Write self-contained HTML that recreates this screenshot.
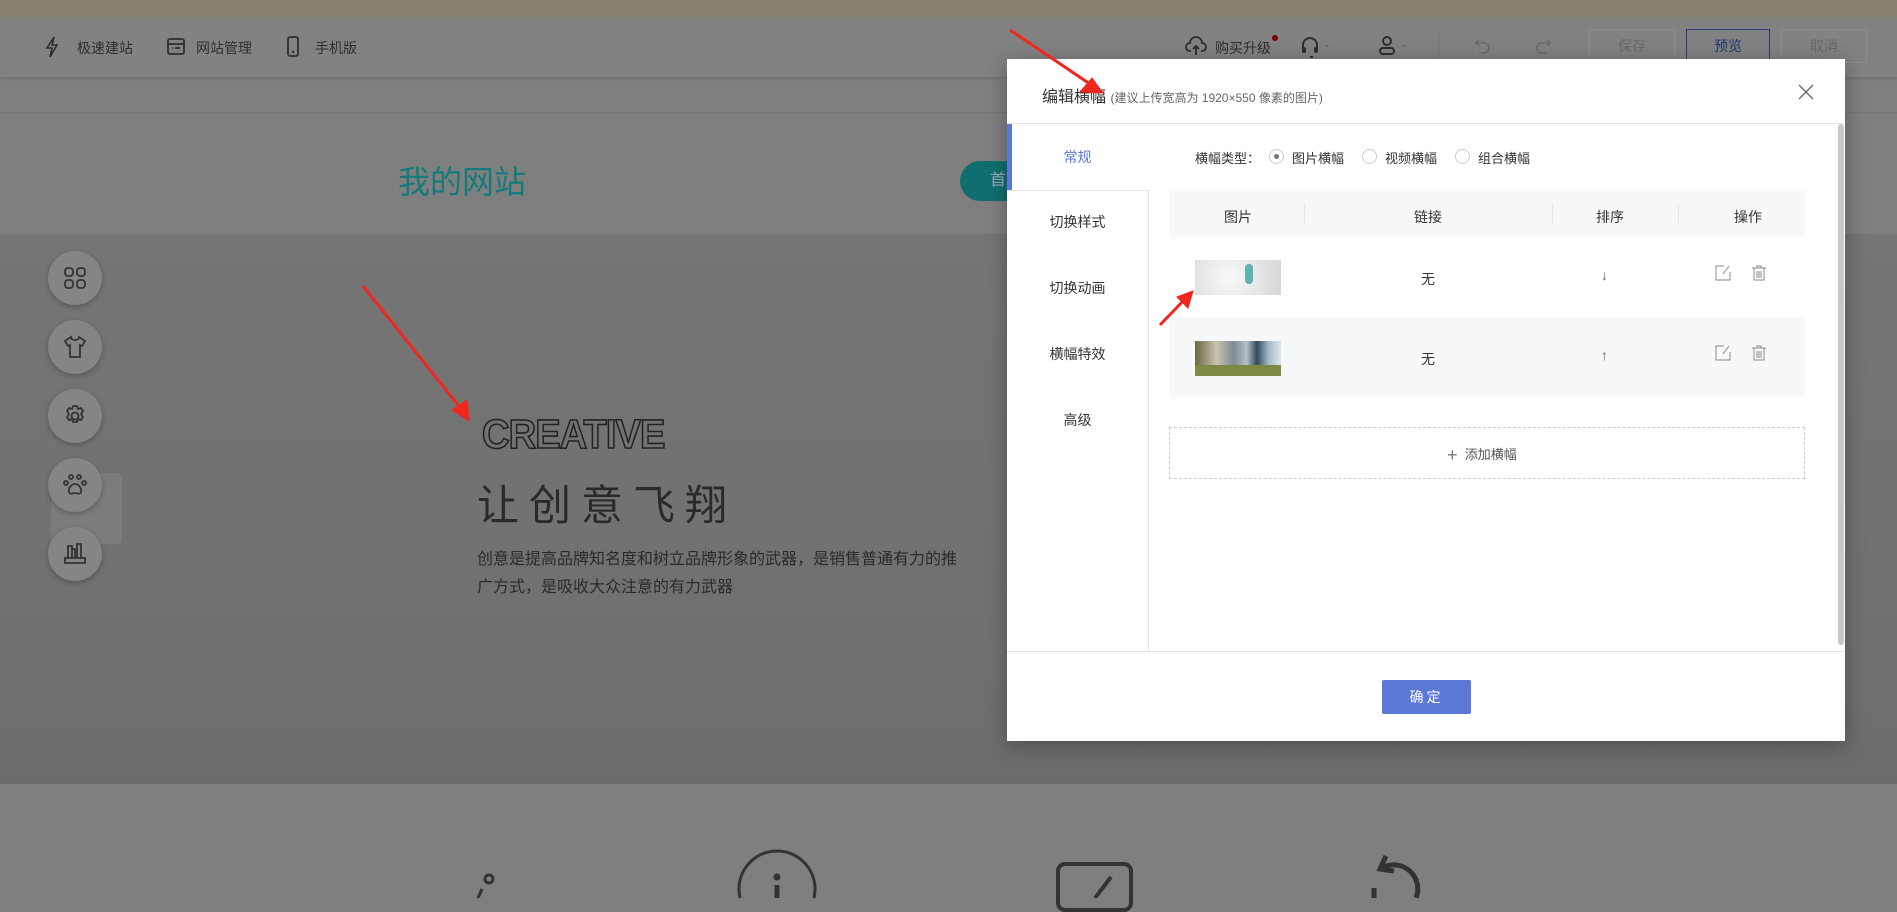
<!DOCTYPE html>
<html><head><meta charset="utf-8">
<style>
*{margin:0;padding:0;box-sizing:border-box}
body{width:1897px;height:898px;overflow:hidden;position:relative;background:#7f7f7f;font-family:"Liberation Sans","Noto Sans CJK SC",sans-serif;color:#333}
.abs{position:absolute}
.tb{font-size:14px;color:#2e2e2e}
.circ{position:absolute;left:48px;width:54px;height:54px;border-radius:50%;background:#858585;box-shadow:0 2px 6px rgba(0,0,0,.25)}
.btn{position:absolute;top:29px;height:34px;border:1px solid #8c8c8c;font-size:14px;color:#6a6a6a;text-align:center;line-height:32px}
.modal{position:absolute;left:1007px;top:59px;width:838px;height:682px;background:#fff;box-shadow:0 4px 20px rgba(0,0,0,.3)}
.tab{position:absolute;left:0;width:141px;text-align:center;font-size:14px;color:#333}
.th{position:absolute;top:16px;font-size:14px;color:#333}
.cell{position:absolute;font-size:14px;color:#333}
</style></head><body>
<div class="abs" style="left:0;top:0;width:1897px;height:17px;background:#8a8375"></div>
<div class="abs" style="left:0;top:17px;width:1897px;height:60px;background:#828282;box-shadow:0 2px 3px rgba(0,0,0,.1)"></div>
<svg class="abs" style="left:45px;top:36px" width="14" height="22" viewBox="0 0 14 22"><path d="M9 1L2 12h5l-2 9 7-12H7l2-8z" fill="none" stroke="#2e2e2e" stroke-width="1.6"/></svg>
<div class="abs tb" style="left:77px;top:38px">极速建站</div>
<svg class="abs" style="left:167px;top:38px" width="18" height="17" viewBox="0 0 18 17"><rect x="1" y="1" width="16" height="15" rx="2" fill="none" stroke="#2e2e2e" stroke-width="1.8"/><path d="M1 6h16M5 10h1M8 10h5" stroke="#2e2e2e" stroke-width="1.8"/></svg>
<div class="abs tb" style="left:196px;top:38px">网站管理</div>
<svg class="abs" style="left:287px;top:36px" width="12" height="21" viewBox="0 0 12 21"><rect x="1" y="1" width="10" height="19" rx="2" fill="none" stroke="#2e2e2e" stroke-width="1.8"/><circle cx="6" cy="16" r="1.2" fill="#2e2e2e"/></svg>
<div class="abs tb" style="left:315px;top:38px">手机版</div>

<svg class="abs" style="left:1185px;top:36px" width="22" height="20" viewBox="0 0 22 20"><path d="M6 15H5a4 4 0 0 1 0-8 6 6 0 0 1 12 0 4 4 0 0 1 0 8h-1" fill="none" stroke="#2e2e2e" stroke-width="1.8"/><path d="M11 19v-9M8 13l3-3 3 3" fill="none" stroke="#2e2e2e" stroke-width="1.8"/></svg>
<div class="abs tb" style="left:1215px;top:38px">购买升级</div>
<div class="abs" style="left:1272px;top:35px;width:6px;height:6px;border-radius:50%;background:#7a0000"></div>
<svg class="abs" style="left:1300px;top:36px" width="34" height="22" viewBox="0 0 34 22"><path d="M3 12V9a7 7 0 0 1 14 0v3" fill="none" stroke="#2e2e2e" stroke-width="2"/><rect x="2" y="11" width="4" height="6" rx="2" fill="#2e2e2e"/><rect x="14" y="11" width="4" height="6" rx="2" fill="#2e2e2e"/><path d="M10 21h3" stroke="#2e2e2e" stroke-width="2"/><path d="M25 9l2 2 2-2z" fill="#666"/></svg>
<svg class="abs" style="left:1378px;top:35px" width="36" height="22" viewBox="0 0 36 22"><circle cx="9" cy="6" r="4" fill="none" stroke="#2e2e2e" stroke-width="2"/><rect x="2" y="13" width="14" height="6" rx="3" fill="none" stroke="#2e2e2e" stroke-width="2"/><path d="M24 10l2 2 2-2z" fill="#666"/></svg>
<div class="abs" style="left:1438px;top:32px;width:1px;height:26px;background:#777"></div>
<svg class="abs" style="left:1474px;top:38px" width="18" height="18" viewBox="0 0 18 18"><path d="M5 2L2 5l3 3M2 5h8a5 5 0 0 1 0 10H5" fill="none" stroke="#6a6a6a" stroke-width="1.5"/></svg>
<svg class="abs" style="left:1534px;top:38px" width="18" height="18" viewBox="0 0 18 18"><path d="M13 2l3 3-3 3M16 5H8a5 5 0 0 0 0 10h5" fill="none" stroke="#6a6a6a" stroke-width="1.5"/></svg>
<div class="btn" style="left:1589px;width:86px">保存</div>
<div class="btn" style="left:1686px;width:84px;border-color:#2a3a72;color:#25376e">预览</div>
<div class="btn" style="left:1781px;width:86px">取消</div>

<div class="abs" style="left:0;top:112px;width:1897px;height:1px;background:#777"></div>
<div class="abs" style="left:398px;top:157px;font-size:32px;color:#157a7a">我的网站</div>
<div class="abs" style="left:960px;top:161px;width:60px;height:40px;border-radius:20px 0 0 20px;background:#116e6e;color:#9ab;font-size:16px;line-height:40px;padding-left:30px">首</div>

<div class="abs" style="left:0;top:234px;width:1897px;height:550px;background:linear-gradient(#757575,#707070 80%,#6b6b6b)"></div>
<div class="abs" style="left:51px;top:473px;width:71px;height:71px;background:#7c7c7c;border-radius:4px"></div>
<div class="circ" style="top:251px"></div>
<div class="circ" style="top:320px"></div>
<div class="circ" style="top:389px"></div>
<div class="circ" style="top:458px"></div>
<div class="circ" style="top:527px"></div>
<svg class="abs" style="left:63px;top:266px" width="24" height="24" viewBox="0 0 24 24" fill="none" stroke="#333" stroke-width="1.8"><rect x="2" y="2" width="8" height="8" rx="3"/><rect x="14" y="2" width="8" height="8" rx="3"/><rect x="2" y="14" width="8" height="8" rx="3"/><rect x="14" y="14" width="8" height="8" rx="3"/></svg>
<svg class="abs" style="left:63px;top:335px" width="24" height="24" viewBox="0 0 24 24" fill="none" stroke="#333" stroke-width="1.8"><path d="M8 2L2 6l3 5 2-1v12h10V10l2 1 3-5-6-4c0 2-2 3-4 3S8 4 8 2z"/></svg>
<svg class="abs" style="left:63px;top:404px" width="24" height="24" viewBox="0 0 24 24" fill="none" stroke="#333" stroke-width="1.8"><circle cx="12" cy="12" r="3.5"/><path d="M10 2h4l1 3 3-1 2 3-2 3 2 3-2 3-3-1-1 3h-4l-1-3-3 1-2-3 2-3-2-3 2-3 3 1z"/></svg>
<svg class="abs" style="left:63px;top:473px" width="24" height="24" viewBox="0 0 24 24" fill="none" stroke="#333" stroke-width="1.8"><circle cx="8" cy="4" r="2"/><circle cx="16" cy="4" r="2"/><circle cx="3" cy="10" r="2"/><circle cx="21" cy="10" r="2"/><path d="M12 11c-4 0-7 5-6 8s4 1 6 1 5 2 6-1-2-8-6-8z"/></svg>
<svg class="abs" style="left:63px;top:542px" width="24" height="24" viewBox="0 0 24 24" fill="none" stroke="#333" stroke-width="1.8"><path d="M2 16h20v5H2zM5 16V4h4v12M9 16V7h3v9M14 16V2h4v14"/></svg>

<div class="abs" style="left:482px;top:411px;font-size:41px;font-family:'Liberation Sans',sans-serif;font-weight:bold;letter-spacing:-1px;color:transparent;-webkit-text-stroke:1.6px #222;white-space:nowrap;transform:scaleX(0.93);transform-origin:left">CREATIVE</div>
<div class="abs" style="left:477px;top:472px;font-size:42px;letter-spacing:10px;color:#2a2a2a">让创意飞翔</div>
<div class="abs" style="left:477px;top:546px;width:490px;font-size:16px;line-height:28px;color:#2a2a2a">创意是提高品牌知名度和树立品牌形象的武器，是销售普通有力的推广方式，是吸收大众注意的有力武器</div>

<!-- bottom icons -->
<svg class="abs" style="left:468px;top:870px" width="40" height="28" viewBox="0 0 40 28"><circle cx="21" cy="9" r="4" fill="none" stroke="#333" stroke-width="3"/><path d="M14 19l-4 9" stroke="#333" stroke-width="3"/></svg>
<svg class="abs" style="left:736px;top:849px" width="82" height="49" viewBox="0 0 82 49"><circle cx="41" cy="40" r="38" fill="none" stroke="#333" stroke-width="3"/><circle cx="41" cy="28" r="3.5" fill="#333"/><path d="M41 36v13" stroke="#333" stroke-width="5"/></svg>
<div class="abs" style="left:1056px;top:862px;width:77px;height:50px;border:4px solid #333;border-radius:9px"></div>
<svg class="abs" style="left:1085px;top:875px" width="30" height="23" viewBox="0 0 30 23"><path d="M26 2L10 23" stroke="#333" stroke-width="4"/></svg>
<svg class="abs" style="left:1362px;top:852px" width="70" height="46" viewBox="0 0 70 46"><path d="M20 16a24 24 0 0 1 34 30M24 4l-6 13 14 2" fill="none" stroke="#333" stroke-width="5"/><path d="M12 36v10" stroke="#333" stroke-width="5"/></svg>

<!-- modal -->
<div class="modal">
  <div class="abs" style="left:35px;top:24px;font-size:16px;color:#333">编辑横幅 <span style="font-size:12px;color:#666">(建议上传宽高为 1920×550 像素的图片)</span></div>
  <svg class="abs" style="left:790px;top:24px" width="18" height="18" viewBox="0 0 18 18"><path d="M2 2l14 14M16 2L2 16" stroke="#666" stroke-width="1.3"/></svg>
  <div class="abs" style="left:0;top:64px;width:838px;height:1px;background:#e4e4e4"></div>
  <div class="abs" style="left:141px;top:131px;width:1px;height:461px;background:#e4e4e4"></div>
  <div class="abs" style="left:0;top:131px;width:141px;height:1px;background:#e4e4e4"></div>
  <div class="abs" style="left:0;top:65px;width:5px;height:66px;background:#5b78d6"></div>
  <div class="tab" style="top:88px;color:#5b78d6">常规</div>
  <div class="tab" style="top:153px">切换样式</div>
  <div class="tab" style="top:219px">切换动画</div>
  <div class="tab" style="top:285px">横幅特效</div>
  <div class="tab" style="top:351px">高级</div>
  <div class="abs" style="left:831px;top:65px;width:6px;height:521px;background:#c8c8c8;border-radius:3px"></div>

  <div class="cell" style="left:188px;top:89px;font-size:13px">横幅类型：</div>
  <div class="abs" style="left:262px;top:90px;width:15px;height:15px;border:1px solid #ccc;border-radius:50%"></div>
  <div class="abs" style="left:267px;top:95px;width:5px;height:5px;border-radius:50%;background:#777"></div>
  <div class="cell" style="left:285px;top:89px;font-size:13px">图片横幅</div>
  <div class="abs" style="left:355px;top:90px;width:15px;height:15px;border:1px solid #ccc;border-radius:50%"></div>
  <div class="cell" style="left:378px;top:89px;font-size:13px">视频横幅</div>
  <div class="abs" style="left:448px;top:90px;width:15px;height:15px;border:1px solid #ccc;border-radius:50%"></div>
  <div class="cell" style="left:471px;top:89px;font-size:13px">组合横幅</div>

  <div class="abs" style="left:162px;top:132px;width:636px;height:46px;background:#f7f8fa">
    <div class="th" style="left:55px">图片</div>
    <div class="abs" style="left:135px;top:14px;width:1px;height:18px;background:#e6e6e6"></div>
    <div class="th" style="left:245px">链接</div>
    <div class="abs" style="left:383px;top:14px;width:1px;height:18px;background:#e6e6e6"></div>
    <div class="th" style="left:427px">排序</div>
    <div class="abs" style="left:509px;top:14px;width:1px;height:18px;background:#e6e6e6"></div>
    <div class="th" style="left:565px">操作</div>
  </div>
  <div class="abs" style="left:188px;top:201px;width:86px;height:35px;background:radial-gradient(circle at 40% 50%,#fafafa,#d6d6d6)"><div class="abs" style="left:50px;top:4px;width:8px;height:20px;border-radius:4px;background:#5fb3b0"></div></div>
  <div class="cell" style="left:414px;top:210px">无</div>
  <div class="cell" style="left:594px;top:208px;color:#666">↓</div>
  <svg class="abs" style="left:708px;top:206px" width="16" height="16" viewBox="0 0 16 16" fill="none" stroke="#888" stroke-width="1"><path d="M9 1H1v14h14V7M14 1L8 9"/></svg>
  <svg class="abs" style="left:745px;top:206px" width="14" height="16" viewBox="0 0 14 16" fill="none" stroke="#888" stroke-width="1"><path d="M0 3h14M5 3V1h4v2M2 3v12h10V3M5 6v7M7 6v7M9 6v7"/></svg>

  <div class="abs" style="left:162px;top:258px;width:636px;height:80px;background:#f7f8fa"></div>
  <div class="abs" style="left:188px;top:282px;width:86px;height:35px;background:linear-gradient(90deg,#6d6a3a 0%,#8c8a70 10%,#c9c4b0 25%,#7f8a95 45%,#b5c0c8 60%,#34495a 72%,#a0b6c6 85%,#dfe8ee 100%)"><div class="abs" style="left:0;top:24px;width:86px;height:11px;background:#7d8a45"></div></div>
  <div class="cell" style="left:414px;top:290px">无</div>
  <div class="cell" style="left:594px;top:288px;color:#666">↑</div>
  <svg class="abs" style="left:708px;top:286px" width="16" height="16" viewBox="0 0 16 16" fill="none" stroke="#888" stroke-width="1"><path d="M9 1H1v14h14V7M14 1L8 9"/></svg>
  <svg class="abs" style="left:745px;top:286px" width="14" height="16" viewBox="0 0 14 16" fill="none" stroke="#888" stroke-width="1"><path d="M0 3h14M5 3V1h4v2M2 3v12h10V3M5 6v7M7 6v7M9 6v7"/></svg>

  <div class="abs" style="left:162px;top:368px;width:636px;height:52px;border:1px dashed #ccc"></div>
  <div class="cell" style="left:440px;top:385px;font-size:13px;color:#555"><span style="font-size:18px;color:#777;vertical-align:-2px">+</span>&nbsp; 添加横幅</div>

  <div class="abs" style="left:0;top:592px;width:838px;height:1px;background:#e4e4e4"></div>
  <div class="abs" style="left:375px;top:621px;width:89px;height:34px;background:#5b78d6;border-radius:2px;color:#fff;font-size:14px;text-align:center;line-height:34px;letter-spacing:3px">确定</div>
</div>

<svg class="abs" style="left:0;top:0" width="1897" height="898" viewBox="0 0 1897 898">
  <g fill="#f0271e" stroke="#f0271e">
  <path d="M1010 30L1090 84" stroke-width="3"/><path d="M1103 93L1080 92L1092 78z"/>
  <path d="M363 286L462 410" stroke-width="3"/><path d="M469 421L452 410L467 400z"/>
  <path d="M1160 325L1185 299" stroke-width="3"/><path d="M1193 291L1188 308L1177 297z"/>
  </g>
</svg>
</body></html>
